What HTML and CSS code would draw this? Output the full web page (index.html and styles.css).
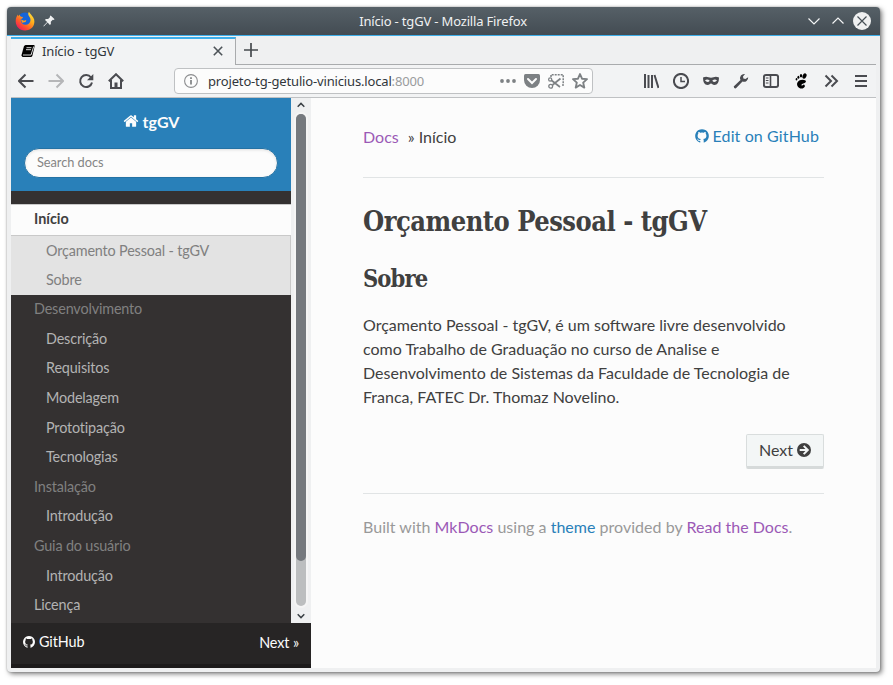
FILE: index.html
```
<!DOCTYPE html>
<html lang="pt-BR">
<head>
<meta charset="utf-8">
<title>Início - tgGV</title>
<link rel="stylesheet" href="styles.css">
</head>
<body>
<svg class="defs" width="0" height="0">
  <symbol id="github" viewBox="0 0 1792 1792"><path d="M896 128q209 0 385.500 103t279.500 279.500 103 385.500q0 251-146.500 451.500t-378.500 277.500q-27 5-40-7t-13-30q0-3 .5-76.500t.5-134.500q0-97-52-142 57-6 102.500-18t94-39 81-66.500 53-105 20.500-150.500q0-119-79-206 37-91-8-204-28-9-81 11t-92 44l-38 24q-93-26-192-26t-192 26q-16-11-42.500-27t-83.500-38.500-85-13.500q-45 113-8 204-79 87-79 206 0 85 20.500 150t52.500 105 80.500 67 94 39 102.500 18q-39 36-49 103-21 10-45 15t-57 5-65.500-21.500-55.500-62.500q-19-32-48.500-52t-49.500-24l-20-3q-21 0-29 4.500t-5 11.500 9 14 13 12l7 5q22 10 43.500 38t31.500 51l10 23q13 38 44 61.500t67 30 69.500 7 55.500-3.500l23-4q0 38 .5 88.500t.5 54.500q0 18-13 30t-40 7q-232-77-378.500-277.500t-146.500-451.500q0-209 103-385.500t279.500-279.500 385.500-103z"/></symbol>
</svg>
<div class="window">
  <header class="titlebar">
    <svg class="firefox" width="20" height="20" viewBox="0 0 20 20">
      <defs><linearGradient id="fox" x1="1" y1="0" x2="0.2" y2="1"><stop offset="0" stop-color="#fff04a"/><stop offset=".4" stop-color="#ffae1b"/><stop offset=".7" stop-color="#ff5a28"/><stop offset="1" stop-color="#ef1262"/></linearGradient></defs>
      <circle cx="10" cy="9" r="7.500" fill="#1765d8"/>
      <path d="M14 .8c.7 1.500 1.500 2 2.600 3.400C19.300 7 20 10 19 13.300 17.700 17.400 14 19.700 9.700 19.500 4.500 19.300.7 15.400.7 10.200c0-3 1-5 2.300-6.600l.3 1.600 1.500-1.700c0 1.200.5 1.800 1.200 2.200L8 6l-.6 1.300-1.700.9c-.1 3 1.500 5.300 4.300 5.600 3 .3 5.400-1.800 5.500-4.600.1-1.700-.7-2.900-1.300-3.700C13 4 12.800 2.300 14 .8z" fill="url(#fox)"/>
      <path d="M6 8.500l3 1.200 2.300-.8-.7 2-3.500.8z" fill="#ff9a1e"/>
    </svg>
    <svg class="pin" width="12" height="12" viewBox="0 0 12 12"><path d="M7.700.4l3.900 3.900-1.100.8-.7-.3-2 2 .1 2.300-1 .8-2.300-2.300L.8 11.500.4 11l3.800-4L2 4.900l.8-1 2.300.1 2-2-.3-.7z" fill="#eff0f1"/></svg>
    <span class="window-title">Início - tgGV - Mozilla Firefox</span>
    <svg class="controls" width="70" height="22" viewBox="0 0 70 22" fill="none" stroke="#f3f4f5" stroke-width="1.200"><path d="M5.500 8.500l5.500 5.500 5.500-5.500M29.500 13.500L35 8l5.500 5.500"/><circle cx="59" cy="11" r="9" fill="#eff0f1" stroke="none"/><path d="M54.500 6.500l9 9M63.500 6.500l-9 9" stroke="#475057"/></svg>
  </header>
  <div class="tabs">
    <div class="tab">
      <svg width="14" height="14" viewBox="0 0 14 14"><path d="M4.500 1h8.700l.5 1-2.400 10-1 1H1.500L.4 11.500 3 2z"/><path d="M5.500 3.700h5M5 5.700h5M2 11h8L12.700 2.500" stroke="#f2f3f4" fill="none" stroke-width=".9"/></svg>
      <span>Início - tgGV</span>
      <svg class="tab-close" width="10" height="10" viewBox="0 0 10 10"><path d="M.8.8l8.400 8.400M9.200.8L.8 9.200" stroke="#4d5358" stroke-width="1.600"/></svg>
    </div>
    <div class="tab-rest"><svg width="14" height="14" viewBox="0 0 14 14"><path d="M7 0v14M0 7h14" stroke="#45494d" stroke-width="1.700"/></svg></div>
  </div>
  <div class="toolbar">
    <div class="nav-icons">
      <svg viewBox="0 0 16 16"><path d="M15.500 8H1.500M7.500 1.500L1 8l6.500 6.500"/></svg>
      <svg class="disabled" viewBox="0 0 16 16"><path d="M.5 8h14M8.500 1.500L15 8l-6.500 6.500"/></svg>
      <svg viewBox="0 0 16 16"><path d="M13 4.500A6 6 0 1 0 14 9.500"/><path d="M15.300 1v6.300H9z" class="fill"/></svg>
      <svg viewBox="0 0 16 16"><path d="M.8 8.300L8 1.200l7.200 7.100M3 7v8h10V7"/><path d="M6.500 9.500h3V15h-3z" class="fill"/></svg>
    </div>
    <div class="urlbar">
      <svg class="info" width="14" height="14" viewBox="0 0 14 14"><circle cx="7" cy="7" r="6.400" fill="none" stroke="#8c8d8f" stroke-width="1.100"/><path d="M7 6v4.500M7 3.200v1.700" stroke="#7e8082" stroke-width="1.700"/></svg>
      <span class="url">projeto-tg-getulio-vinicius.local<span class="port">:8000</span></span>
      <svg viewBox="0 0 16 16"><g fill="#7d8184"><circle cx="2" cy="8" r="1.900"/><circle cx="8" cy="8" r="1.900"/><circle cx="14" cy="8" r="1.900"/></g></svg>
      <svg viewBox="0 0 16 16"><path d="M1.500 1h13Q16 1 16 2.500V7a8 8 0 0 1-16 0V2.500Q0 1 1.500 1z" fill="#7d8184"/><path d="M4 6l4 4 4-4" stroke="#fcfcfc" stroke-width="2" fill="none" stroke-linecap="round"/></svg>
      <svg viewBox="0 0 16 16" fill="none" stroke="#7d8184"><path d="M3 4V1.700h12.200V12H13" stroke-width="1.500" stroke-dasharray="2 1"/><path d="M3 7l9 7M12.500 5.500L4.500 12" stroke-width="1.700"/><circle cx="2.200" cy="6.500" r="1.600" stroke-width="1.200"/><circle cx="2.700" cy="13.200" r="1.900" stroke-width="1.300"/></svg>
      <svg viewBox="0 0 16 16" fill="none" stroke="#7d8184" stroke-width="1.900" stroke-linejoin="round"><path d="M8 1l2 4.700 5 .4-3.800 3.500 1.100 5L8 12l-4.300 2.600 1.100-5L1 6.100l5-.4z"/></svg>
    </div>
    <div class="tool-icons">
      <svg viewBox="0 0 16 16"><path d="M2 1v14M5.500 2v13M9 2v13M11.500 2l4 13"/></svg>
      <svg viewBox="0 0 16 16"><circle cx="8" cy="8" r="7.100"/><path d="M8 4v4.500h4" stroke-width="1.500"/></svg>
      <svg viewBox="0 0 16 16"><path class="fill" fill-rule="evenodd" d="M0 4.500q3-1.200 5.500-.3l2.500.6 2.500-.6q2.500-.9 5.500.3 0 7.500-4.500 7.500C9.500 12 9 10.500 8 10.500S6.500 12 4.500 12Q0 12 0 4.500zm2 3q2.500 2.800 4.800.2Q4 5.200 2 7.500zm7.200.2q2.300 2.600 4.800-.2-2-2.300-4.800.2z"/></svg>
      <svg viewBox="0 0 16 16"><path class="fill" d="M15.200 4.200a4.200 4.200 0 0 1-5.700 4.300L3 15.300Q1 15.800.7 13.500L7.500 7A4.200 4.200 0 0 1 12 1L10 3.600l.4 2 2 .4z"/></svg>
      <svg viewBox="0 0 16 16"><rect x=".9" y="1.900" width="14.200" height="12.200" rx="2"/><path d="M7.500 2v12" stroke-width="1.600"/><path d="M2.800 5h2.700M2.800 7.500h2.700M2.800 10h2.700" stroke-width="1"/></svg>
      <svg class="foot" viewBox="0 0 16 16"><ellipse cx="11.500" cy="3" rx="1.900" ry="2.800" transform="rotate(25 11.500 3)"/><ellipse cx="8" cy="2.800" rx="1.200" ry="1.800"/><ellipse cx="5.400" cy="4.200" rx="1" ry="1.500"/><ellipse cx="3.500" cy="6.300" rx=".8" ry="1.200"/><path d="M12.500 7.500C10 5.800 5 7 4.200 10S6 15.800 8.700 15.500s4-2.500 2.700-3.600-1.300 1.200-2.600.6S9.300 11 11 10.300s2.500-1.800 1.500-2.800z"/></svg>
      <svg viewBox="0 0 16 16"><path d="M2.500 2.500L8 8l-5.500 5.500M8.500 2.500L14 8l-5.500 5.500"/></svg>
      <svg viewBox="0 0 16 16"><path d="M2 3h12M2 8h12M2 13h12"/></svg>
    </div>
  </div>
  <div class="page">
    <aside class="sidebar">
      <div class="side-main">
        <div class="side-scroll">
          <div class="side-head">
            <div class="brand"><svg width="16" height="16" viewBox="0 0 1792 1792"><path fill="#fcfcfc" d="M1472 992v480q0 26-19 45t-45 19h-384v-384h-256v384h-384q-26 0-45-19t-19-45v-480q0-1 .5-3t.5-3l575-474 575 474q1 2 1 6zm223-69l-62 74q-8 9-21 11h-3q-13 0-21-7l-692-577-692 577q-12 8-24 7-13-2-21-11l-62-74q-8-10-7-23.500t11-21.500l719-599q32-26 76-26t76 26l244 204v-195q0-14 9-23t23-9h192q14 0 23 9t9 23v408l219 182q10 8 11 21.500t-7 23.500z"/></svg><span>tgGV</span></div>
            <div class="search">Search docs</div>
          </div>
          <nav class="menu">
            <div class="current">Início</div>
            <div class="current-sub"><div>Orçamento Pessoal - tgGV</div><div>Sobre</div></div>
            <div class="section">Desenvolvimento</div>
            <div class="sub">Descrição</div>
            <div class="sub">Requisitos</div>
            <div class="sub">Modelagem</div>
            <div class="sub">Prototipação</div>
            <div class="sub">Tecnologias</div>
            <div class="section">Instalação</div>
            <div class="sub">Introdução</div>
            <div class="section">Guia do usuário</div>
            <div class="sub">Introdução</div>
            <div class="top">Licença</div>
          </nav>
        </div>
        <div class="scrollbar">
          <svg width="8" height="6" viewBox="0 0 8 6"><path d="M.7 4.700L4 1.400l3.300 3.300" fill="none" stroke="#3b4045" stroke-width="1.500"/></svg>
          <div class="track"><div class="thumb"></div></div>
          <svg width="8" height="6" viewBox="0 0 8 6"><path d="M.7 1.300L4 4.600l3.300-3.300" fill="none" stroke="#3b4045" stroke-width="1.500"/></svg>
        </div>
      </div>
      <div class="versions"><span class="gh"><svg width="14" height="14" fill="#fcfcfc"><use href="#github"/></svg>GitHub</span><span class="ver-next">Next »</span></div>
    </aside>
    <main class="content">
      <div class="crumbs"><span><a class="visited">Docs</a><span class="here">» Início</span></span><a class="edit"><svg width="16" height="16" fill="#2980b9"><use href="#github"/></svg>Edit on GitHub</a></div>
      <h1>Orçamento Pessoal - tgGV</h1>
      <h2>Sobre</h2>
      <p>Orçamento Pessoal - tgGV, é um software livre desenvolvido<br>como Trabalho de Graduação no curso de Analise e<br>Desenvolvimento de Sistemas da Faculdade de Tecnologia de<br>Franca, FATEC Dr. Thomaz Novelino.</p>
      <div class="pager"><a class="next">Next <svg width="14" height="14" viewBox="0 0 14 14"><circle cx="7" cy="7" r="7" fill="#404040"/><path d="M2.700 7h7.500M6.700 2.900L10.800 7l-4.100 4.100" fill="none" stroke="#f3f6f6" stroke-width="2"/></svg></a></div>
      <footer>Built with <a class="visited">MkDocs</a> using a <a>theme</a> provided by <a class="visited">Read the Docs</a>.</footer>
    </main>
  </div>
</div>
</body>
</html>
```
FILE: styles.css
```
* { box-sizing: border-box; }
body { margin: 0; width: 893px; height: 685px; overflow: hidden; background: #fff; font-family: Lato, sans-serif; color: #404040; padding: 7px; }
.defs { display: block; position: absolute; }
svg { flex: none; display: block; }
.window { width: 873px; height: 665px; background: #eff0f1; border-radius: 4px; box-shadow: 2px 2px 5px rgba(0,0,0,.5), 0 0 2px rgba(0,0,0,.3); display: flex; flex-direction: column; overflow: hidden; }
.titlebar { height: 29px; flex: none; background: linear-gradient(#566067, #434c53); border-bottom: 1px solid #3daee9; display: flex; align-items: center; padding: 0 7px 0 8px; font: 13px "Noto Sans", sans-serif; letter-spacing: -.17px; color: #eff0f1; }
.pin { margin-left: 8px; }
.window-title { flex: 1; text-align: center; padding-left: 28px; }
.tabs { height: 29px; flex: none; display: flex; padding: 1px 4px 0; font: 13px "Noto Sans", sans-serif; letter-spacing: -.15px; color: #31363b; }
.tab { width: 225px; border-top: 2px solid #3daee9; border-right: 1px solid #a9abad; background: #f2f3f4; display: flex; align-items: center; padding: 0 12px 2px 10px; gap: 7px; }
.tab-close { margin-left: auto; }
.tab-rest { flex: 1; border-bottom: 1px solid #a9abad; display: flex; align-items: center; padding: 0 0 2px 8px; }
.toolbar { height: 33px; flex: none; margin: 0 4px; border-bottom: 1px solid #bfc1c3; background: #f2f3f4; display: flex; align-items: center; padding: 0 7px; }
.toolbar svg { width: 16px; height: 16px; }
.nav-icons, .tool-icons { display: flex; gap: 14px; fill: none; stroke: #4a4b50; stroke-width: 2; }
.fill { fill: #4a4b50; stroke: none; }
.disabled { stroke: #b5b6b8; }
.foot { fill: #000; stroke: none; }
.urlbar { width: 419px; height: 26px; margin: 0 50px; background: #fcfcfc; border: 1px solid #bfc1c3; border-radius: 4px; display: flex; align-items: center; gap: 8px; padding: 0 4px 0 9px; font: 13px "Noto Sans", sans-serif; letter-spacing: -.16px; color: #31363b; }
.urlbar .info { width: 14px; height: 14px; }
.url { flex: 1; margin-left: 2px; }
.port { color: #999b9d; }
.page { flex: 1; display: flex; margin: 0 4px 4px; min-height: 0; background: #fcfcfc; }
.sidebar { width: 300px; display: flex; flex-direction: column; }
.side-main { flex: 1; display: flex; min-height: 0; }
.side-scroll { width: 280px; background: #343131; overflow: hidden; }
.side-head { height: 93px; background: #2980b9; padding: 10px 13px; }
.brand { height: 26px; display: flex; align-items: center; justify-content: center; gap: 4px; color: #fcfcfc; font-size: 16px; font-weight: 700; }
.search { height: 30px; margin-top: 14px; border: 1px solid #2472a4; border-radius: 15px; background: #fcfcfc; box-shadow: inset 0 1px 3px #ddd; padding: 0 12px; font-size: 12.800px; line-height: 27px; letter-spacing: -.05px; color: #858585; }
.menu { padding-top: 13px; font-size: 14.400px; line-height: 29.630px; letter-spacing: -.16px; }
.current { height: 32px; border-top: 1px solid #c9c9c9; border-bottom: 1px solid #c9c9c9; background: #fcfcfc; padding-left: 23px; font-weight: 700; line-height: 28px; letter-spacing: 0; }
.current-sub { height: 59px; background: #e3e3e3; border-right: 1px solid #c9c9c9; padding-left: 35px; color: #808080; line-height: 29px; margin-bottom: -1px; }
.section { padding-left: 23px; color: #808080; }
.sub { padding-left: 35px; color: #b3b3b3; }
.top { padding-left: 23px; color: #b3b3b3; }
.scrollbar { width: 20px; background: #eff0f1; display: flex; flex-direction: column; align-items: center; padding: 4px 0; }
.track { flex: 1; width: 10px; margin: 6px 0 7px; border-radius: 5px; background: #bcbebf; box-shadow: 0 0 0 2px #f5f5f5; }
.thumb { height: 447px; border-radius: 5px; background: #75797e; }
.versions { height: 45px; background: #272525; border-bottom: 4px solid #1d1b1b; color: #fcfcfc; font-size: 14.400px; letter-spacing: -.1px; display: flex; justify-content: space-between; padding: 0 12px 0 11px; line-height: 38px; }
.gh { display: flex; align-items: center; gap: 3px; padding-bottom: 3px; }
.ver-next { line-height: 40px; }
.content { flex: 1; padding: 0 52px; font-size: 16px; line-height: 24px; }
.crumbs { height: 80px; border-bottom: 1px solid #e1e4e5; padding: 27px 5px 0 0; display: flex; justify-content: space-between; align-items: flex-start; }
.here { margin-left: 9px; }
a { color: #2980b9; }
.visited { color: #9b59b6; }
.edit { display: flex; align-items: center; gap: 3px; margin-top: -1px; letter-spacing: .12px; }
h1, h2 { font-family: "Roboto Slab", "DejaVu Serif Condensed", "DejaVu Serif", serif; font-stretch: condensed; font-weight: 700; margin: 0; white-space: nowrap; }
h1 { font-size: 27px; line-height: 36px; margin-top: 26px; letter-spacing: -.5px; }
h2 { font-size: 23.500px; line-height: 32px; margin-top: 23px; letter-spacing: -.9px; }
p { margin: 18px 0 25px; white-space: nowrap; }
.pager { display: flex; justify-content: flex-end; }
.next { width: 78px; height: 35px; display: flex; align-items: center; justify-content: center; gap: 4px; color: #404040; background: #f3f6f6; border: 1px solid #d9dddd; border-bottom: 3px solid #d6dada; border-radius: 2px; padding-bottom: 1px; }
footer { margin-top: 24px; border-top: 1px solid #e1e4e5; padding-top: 21px; color: #999; white-space: nowrap; letter-spacing: .02px; }
```
